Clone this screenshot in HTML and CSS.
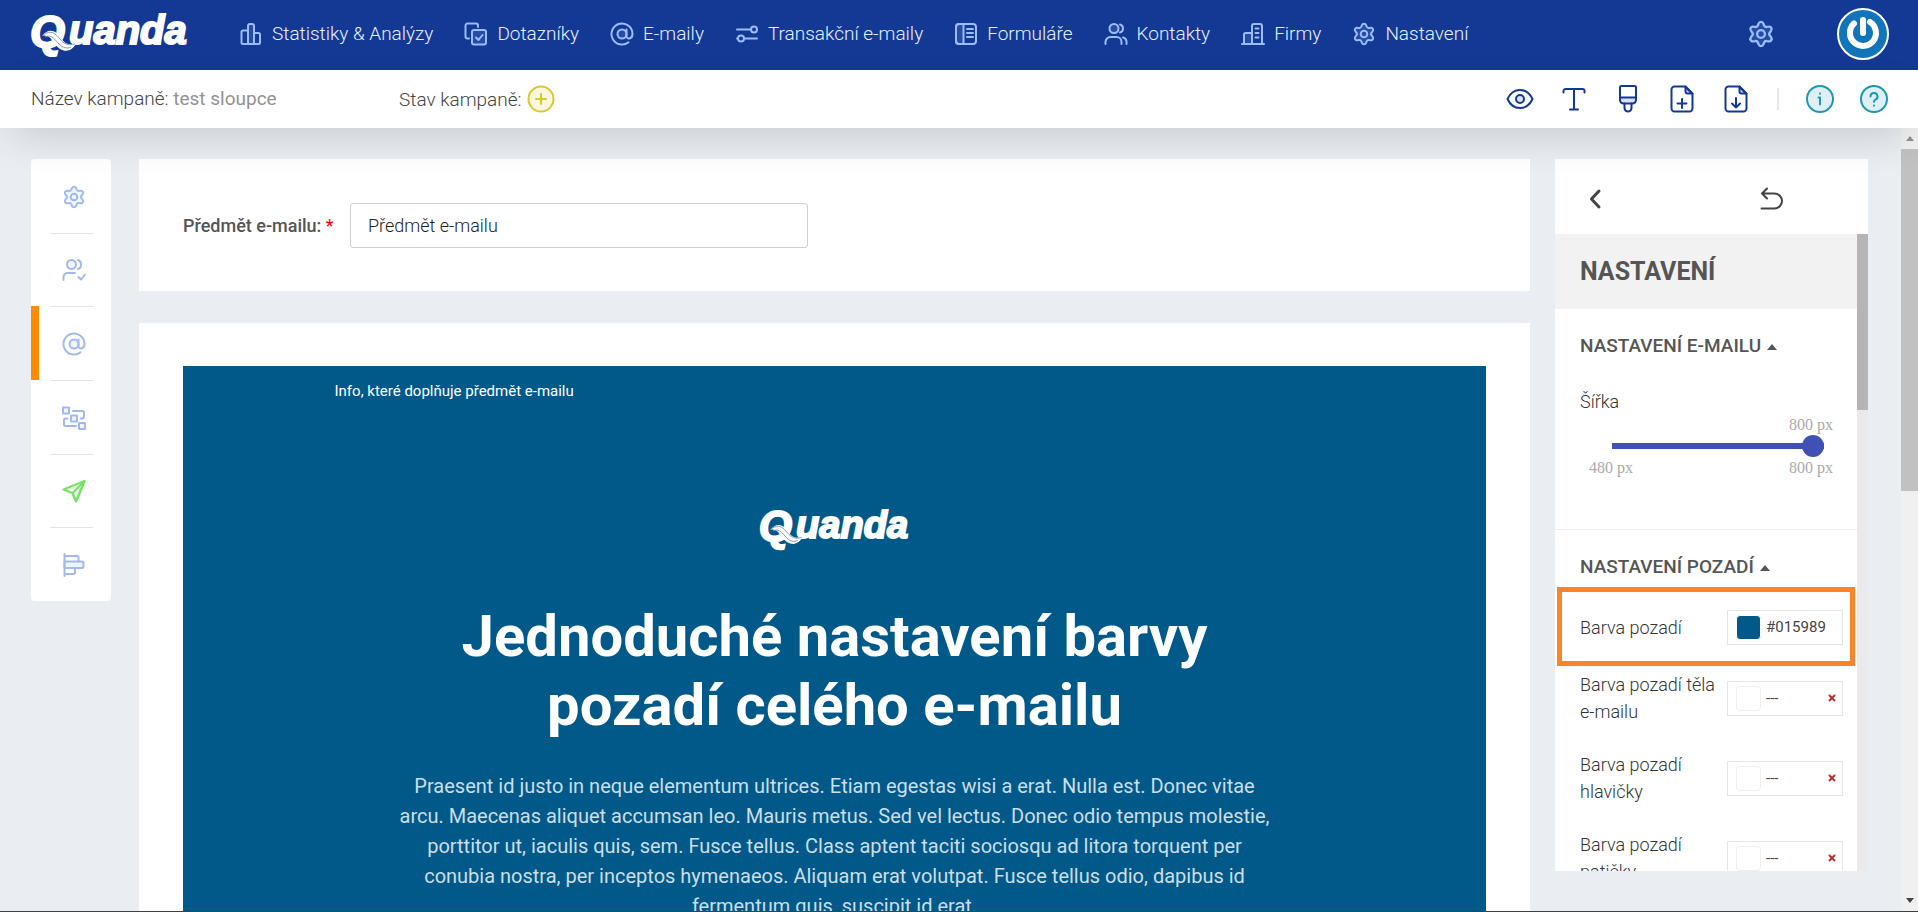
FILE: index.html
```
<!DOCTYPE html>
<html lang="cs">
<head>
<meta charset="utf-8">
<meta name="viewport" content="width=device-width, initial-scale=1">
<title>Quanda</title>
<link rel="stylesheet" href="styles.css">
</head>
<body>
<svg class="defs" aria-hidden="true">
  <symbol id="logo" viewBox="0 0 158 42" overflow="visible">
    <text class="logo-text" x="-1" y="34" font-size="45">Q</text>
    <text class="logo-text" x="38" y="31" font-size="40">uanda</text>
    <path class="logo-wave" d="M11 23c7-9 14-5 18 1s9 10 17 5c-4 8-10 11-17 7S20 20 11 23z"/>
    <path class="logo-line" d="M12 22c8-6 13-1 17 4s8 7 15 5M14 24c7-3 10 3 14 7s8 5 12 3"/>
  </symbol>
  <symbol id="gear" viewBox="0 0 24 24">
    <path class="tint" d="M9.9 3.2a2.2 2.2 0 0 1 4.200 0l.5 1.300a2.200 2.200 0 0 0 2.500 1.400l1.400-.2a2.200 2.200 0 0 1 2.100 3.600l-.9 1.200a2.200 2.200 0 0 0 0 3l.9 1.200a2.200 2.200 0 0 1-2.100 3.600l-1.400-.2a2.200 2.200 0 0 0-2.500 1.400l-.5 1.300a2.200 2.200 0 0 1-4.200 0l-.5-1.300a2.200 2.200 0 0 0-2.500-1.400l-1.400.2a2.200 2.200 0 0 1-2.100-3.600l.9-1.200a2.200 2.200 0 0 0 0-3l-.9-1.200a2.200 2.200 0 0 1 2.100-3.600l1.400.2a2.200 2.200 0 0 0 2.500-1.400z"/>
    <circle cx="12" cy="12" r="3.300"/>
  </symbol>
  <symbol id="at" viewBox="0 0 24 24">
    <circle class="tint" cx="12" cy="12" r="4.500"/>
    <path d="M16.500 7.500V14c0 3.700 6 3.500 6-2A10.500 10.500 0 1 0 18.500 20.300"/>
  </symbol>
</svg>

<header class="topbar">
  <a class="brand" href="#" aria-label="Quanda"><svg class="logo"><use href="#logo"/></svg></a>
  <nav class="menu">
    <a href="#"><svg class="icon" viewBox="0 0 24 24"><path d="M2.500 10a1.500 1.500 0 0 1 1.500-1.500h5v13.500H4A1.500 1.500 0 0 1 2.500 20.500zM15 11h4.500A1.500 1.500 0 0 1 21 12.500v8a1.500 1.500 0 0 1-1.500 1.500H15z"/><path class="tint" d="M9 22V4a2 2 0 0 1 2-2h2a2 2 0 0 1 2 2v18z"/></svg>Statistiky &amp; Analýzy</a>
    <a href="#"><svg class="icon" viewBox="0 0 24 24"><path d="M5 16.500H3.500a2 2 0 0 1-2-2v-11a2 2 0 0 1 2-2H12a2 2 0 0 1 2 2V5"/><rect class="tint" x="8" y="8" width="14" height="14.500" rx="2"/><path d="M12 15.500l2.500 2.500 4-5"/></svg>Dotazníky</a>
    <a href="#"><svg class="icon"><use href="#at"/></svg>E-maily</a>
    <a href="#"><svg class="icon" viewBox="0 0 24 24"><path d="M2 7.500h14M10 16.500h12M2 16.500h1"/><circle cx="19" cy="7.500" r="3"/><circle cx="6" cy="16.500" r="3"/></svg>Transakční e-maily</a>
    <a href="#"><svg class="icon" viewBox="0 0 24 24"><rect x="2" y="2" width="20" height="20" rx="3"/><path class="tint" d="M5 2h4.500v20H5a3 3 0 0 1-3-3V5a3 3 0 0 1 3-3z"/><path d="M13 7h6M13 11h6M13 15h6"/></svg>Formuláře</a>
    <a href="#"><svg class="icon" viewBox="0 0 24 24"><circle class="tint" cx="10" cy="6.500" r="4.500"/><path d="M1.500 22v-2a5 5 0 0 1 5-5h6a5 5 0 0 1 5 5v2M16 2.500c4 1 4 7 0 8M19 15.500a4.500 4.500 0 0 1 3.500 4.500v2"/></svg>Kontakty</a>
    <a href="#"><svg class="icon" viewBox="0 0 24 24"><path class="tint" d="M3 22v-9.500a1.500 1.500 0 0 1 1.500-1.500H11v11"/><path d="M1 22h22M11 22V4a2 2 0 0 1 2-2h6a2 2 0 0 1 2 2v18M14.500 6.500h3M14.500 11h3M14.500 15.500h3"/></svg>Firmy</a>
    <a href="#"><svg class="icon"><use href="#gear"/></svg>Nastavení</a>
  </nav>
  <button class="icon-btn top-gear" type="button" aria-label="Nastavení účtu"><svg class="icon"><use href="#gear"/></svg></button>
  <button class="avatar" type="button" aria-label="Profil"><svg viewBox="0 0 48 48"><path d="M15 13.500A13 13 0 1 0 31 12"/><path d="M24 10v13"/></svg></button>
</header>

<section class="subbar">
  <p class="campaign">Název kampaně: <span>test sloupce</span></p>
  <p class="state">Stav kampaně: <button class="icon-btn" type="button" aria-label="Přidat stav"><svg class="icon yellow" viewBox="0 0 28 28"><circle class="tint" cx="14" cy="14" r="12.500"/><path d="M14 9v10M9 14h10"/></svg></button></p>
  <div class="tools">
    <button class="icon-btn" type="button" aria-label="Náhled"><svg class="icon" viewBox="0 0 28 28"><path d="M1.500 14C7 2 21 2 26.500 14 21 26 7 26 1.500 14z" /><circle class="tint" cx="14" cy="14" r="4"/></svg></button>
    <button class="icon-btn" type="button" aria-label="Text"><svg class="icon" viewBox="0 0 28 28"><path d="M3.500 7.500V6a2 2 0 0 1 2-2h17a2 2 0 0 1 2 2v1.500M14 4v20.500M10 24.500h8"/></svg></button>
    <button class="icon-btn" type="button" aria-label="Styl"><svg class="icon" viewBox="0 0 28 28"><path class="tint" d="M6 12.500h16V15a3.500 3.500 0 0 1-3.500 3.500h-9A3.500 3.500 0 0 1 6 15z"/><path d="M6 12.500v-10A1.500 1.500 0 0 1 7.500 1h13A1.500 1.500 0 0 1 22 2.500v10M10.500 18.500V23a3.500 3.500 0 0 0 7 0v-4.500"/></svg></button>
    <button class="icon-btn" type="button" aria-label="Nový soubor"><svg class="icon" viewBox="0 0 28 28"><path class="tint" d="M17.500 1.500 24.500 8.500h-5a2 2 0 0 1-2-2z"/><path d="M17 1.500H6.500a3 3 0 0 0-3 3v19a3 3 0 0 0 3 3h15a3 3 0 0 0 3-3V9zM14 14v9M9.500 18.500h9"/></svg></button>
    <button class="icon-btn" type="button" aria-label="Uložit soubor"><svg class="icon" viewBox="0 0 28 28"><path class="tint" d="M17.500 1.500 24.500 8.500h-5a2 2 0 0 1-2-2z"/><path d="M17 1.500H6.500a3 3 0 0 0-3 3v19a3 3 0 0 0 3 3h15a3 3 0 0 0 3-3V9zM14 13v9M10 18.500l4 4 4-4"/></svg></button>
    <i class="separator"></i>
    <button class="icon-btn" type="button" aria-label="Informace"><svg class="icon teal" viewBox="0 0 28 28"><circle class="tint" cx="14" cy="14" r="13"/><path d="M12.500 12.500H14v7M14 8.500v.2"/></svg></button>
    <button class="icon-btn" type="button" aria-label="Nápověda"><svg class="icon teal" viewBox="0 0 28 28"><circle class="tint" cx="14" cy="14" r="13"/><path d="M10.500 11.500a3.500 3.500 0 1 1 5 3.200c-1 .5-1.500 1-1.500 2.300M14 20.500v.2"/></svg></button>
  </div>
</section>

<div class="workspace">
  <nav class="steps">
    <a href="#" aria-label="Nastavení"><svg class="icon"><use href="#gear"/></svg></a>
    <a href="#" aria-label="Příjemci"><svg class="icon" viewBox="0 0 24 24"><circle class="tint" cx="9.500" cy="6.500" r="4.500"/><path d="M1.500 22v-3a4 4 0 0 1 4-4H13M16 2c4 1 4 8 0 9M16.500 19l2.500 2.500 4-5"/></svg></a>
    <a class="active" href="#" aria-label="E-mail"><svg class="icon"><use href="#at"/></svg></a>
    <a href="#" aria-label="Workflow"><svg class="icon" viewBox="0 0 24 24"><path d="M11 5h9.500A1.500 1.500 0 0 1 22 6.500v4a2 2 0 0 1-2 2h-1.500M5.500 12.500H4a2 2 0 0 0-2 2v4A1.500 1.500 0 0 0 3.500 20H14"/><rect class="tint" x="1" y="1.500" width="6" height="6"/><rect class="tint" x="9" y="9.500" width="6" height="6"/><rect class="tint" x="17" y="17" width="6" height="6"/></svg></a>
    <a href="#" aria-label="Odeslat"><svg class="icon green" viewBox="0 0 24 24"><path class="tint" d="M22.500 2 14 22.500 10.500 14z"/><path d="M22.500 2 1.500 10.500 10.500 14 14 22.500z"/></svg></a>
    <a href="#" aria-label="Reporty"><svg class="icon" viewBox="0 0 24 24"><path class="tint" d="M2.500 8.500H20a1.500 1.500 0 0 1 1.500 1.500v3.500a1.500 1.500 0 0 1-1.500 1.500H2.500z"/><path d="M2.500 1v22M2.500 3H15a1.500 1.500 0 0 1 1.500 1.500v4M13 15v4.500a1.500 1.500 0 0 1-1.500 1.500h-9"/></svg></a>
  </nav>

  <main class="content">
    <form class="card subject">
      <label for="subject">Předmět e-mailu: <em>*</em></label>
      <input id="subject" type="text" value="Předmět e-mailu">
    </form>
    <section class="card preview">
      <article class="email">
        <p class="preheader">Info, které doplňuje předmět e-mailu</p>
        <svg class="logo email-logo" role="img" aria-label="Quanda" viewBox="0 0 158 42"><use href="#logo" width="158" height="42"/></svg>
        <h1>Jednoduché nastavení barvy pozadí celého e-mailu</h1>
        <p class="lead">Praesent id justo in neque elementum ultrices. Etiam egestas wisi a erat. Nulla est. Donec vitae arcu. Maecenas aliquet accumsan leo. Mauris metus. Sed vel lectus. Donec odio tempus molestie, porttitor ut, iaculis quis, sem. Fusce tellus. Class aptent taciti sociosqu ad litora torquent per conubia nostra, per inceptos hymenaeos. Aliquam erat volutpat. Fusce tellus odio, dapibus id fermentum quis, suscipit id erat.</p>
      </article>
    </section>
  </main>

  <aside class="panel">
    <div class="panel-head">
      <button class="icon-btn" type="button" aria-label="Zpět"><svg class="icon chevron" viewBox="0 0 24 24"><path d="M14 4 6.500 12l7.500 8"/></svg></button>
      <button class="icon-btn" type="button" aria-label="Vrátit změnu"><svg class="icon" viewBox="0 0 24 24"><path d="M7 1.500 2 6.500l5 5M2 6.500h12.500a7.500 7.500 0 0 1 0 15H1.500"/></svg></button>
    </div>
    <div class="panel-scroll">
      <div class="panel-body">
        <h2>NASTAVENÍ</h2>
        <section class="group">
          <h3><button type="button">NASTAVENÍ E-MAILU<i class="caret"></i></button></h3>
          <label class="width-label" for="width">Šířka</label>
          <div class="slider">
            <output for="width">800 px</output>
            <input id="width" type="range" min="480" max="800" value="800">
            <div class="limits"><span>480 px</span><span>800 px</span></div>
          </div>
        </section>
        <section class="group">
          <h3><button type="button">NASTAVENÍ POZADÍ<i class="caret"></i></button></h3>
          <div class="row highlighted">
            <label for="bg">Barva pozadí</label>
            <div class="color"><i class="swatch filled"></i><input id="bg" type="text" value="#015989"></div>
          </div>
          <div class="row">
            <label for="bg-body">Barva pozadí těla e-mailu</label>
            <div class="color"><i class="swatch"></i><input id="bg-body" type="text" value="---"><button type="button" aria-label="Vymazat"><svg viewBox="0 0 8 8"><path d="M1 1l6 6M7 1 1 7"/></svg></button></div>
          </div>
          <div class="row">
            <label for="bg-head">Barva pozadí hlavičky</label>
            <div class="color"><i class="swatch"></i><input id="bg-head" type="text" value="---"><button type="button" aria-label="Vymazat"><svg viewBox="0 0 8 8"><path d="M1 1l6 6M7 1 1 7"/></svg></button></div>
          </div>
          <div class="row">
            <label for="bg-foot">Barva pozadí patičky</label>
            <div class="color"><i class="swatch"></i><input id="bg-foot" type="text" value="---"><button type="button" aria-label="Vymazat"><svg viewBox="0 0 8 8"><path d="M1 1l6 6M7 1 1 7"/></svg></button></div>
          </div>
        </section>
      </div>
      <div class="panel-bar"><i></i></div>
    </div>
  </aside>

  <div class="scrollbar">
    <i class="arrow up"></i>
    <i class="thumb"></i>
    <i class="arrow down"></i>
  </div>
</div>
</body>
</html>
```

FILE: styles.css
```
* { box-sizing: border-box; }

body {
  margin: 0;
  height: 100vh;
  display: flex;
  flex-direction: column;
  overflow: hidden;
  border-bottom: 1px solid #3f4045;
  background: #eaeef2;
  color: #555;
  font: 18px/27px Roboto, "Liberation Sans", sans-serif;
}

h1, h2, h3, p { margin: 0; }
a { color: inherit; text-decoration: none; }
button, input { font: inherit; color: inherit; }
button { padding: 0; border: 0; background: none; }

.defs { position: absolute; width: 0; height: 0; overflow: visible; }

.icon {
  display: block;
  width: 24px;
  height: 24px;
  flex: none;
  fill: none;
  stroke: currentColor;
  stroke-width: 2;
  stroke-linecap: round;
  stroke-linejoin: round;
}
.tint { fill: currentColor; fill-opacity: 0.15; }
.icon-btn { display: inline-flex; }

.logo { display: block; width: 158px; height: 42px; overflow: visible; }
.logo-text {
  font-family: "Liberation Sans", sans-serif;
  font-weight: 700;
  font-style: italic;
  fill: #fff;
  stroke: #fff;
  stroke-width: 2;
}
.logo-wave { fill: #fff; }
.logo-line { fill: none; stroke: #8497c6; stroke-width: 1; }

/* Top navigation */
.topbar {
  flex: none;
  height: 70px;
  display: flex;
  align-items: center;
  padding: 0 29px 2px 31px;
  background: #133995;
  color: #e8eefb;
}
.brand { margin-right: 50px; }
.menu { display: flex; gap: 31px; flex: 1; font-size: 19px; font-weight: 300; }
.menu a { display: flex; align-items: center; gap: 9px; white-space: nowrap; line-height: 24px; }
.menu .icon, .top-gear { color: #9dbcff; }
.top-gear { margin-right: 62px; }
.top-gear .icon { width: 28px; height: 28px; }
.avatar {
  width: 52px;
  height: 52px;
  border: 2px solid #fff;
  border-radius: 50%;
  background: #1275b9;
}
.avatar svg { display: block; fill: none; stroke: #fff; stroke-width: 6; stroke-linecap: round; }

/* Campaign bar */
.subbar {
  flex: none;
  position: relative;
  z-index: 1;
  height: 58px;
  display: flex;
  align-items: center;
  padding: 0 30px 0 31px;
  background: #fff;
  box-shadow: 0 16px 40px -12px rgba(50, 60, 65, 0.24);
  font-size: 19px;
  font-weight: 300;
  color: #444;
}
.campaign { width: 368px; padding-bottom: 2px; }
.campaign span { font-weight: 400; color: #929292; }
.state { display: flex; align-items: center; gap: 5px; flex: 1; }
.subbar .icon { width: 28px; height: 28px; }
.yellow { color: #d9c92c; }
.teal { color: #1f97b0; }
.tools { display: flex; align-items: center; gap: 26px; color: #133995; }
.separator { width: 2px; height: 22px; margin: 0 1px; background: #e8e8e8; }

/* Workspace */
.workspace { flex: 1; min-height: 0; display: flex; overflow: hidden; }

.steps {
  flex: none;
  align-self: flex-start;
  display: grid;
  grid-auto-rows: 1fr;
  width: 80px;
  height: 442px;
  margin: 31px 28px 0 31px;
  border-radius: 4px;
  background: #fff;
  color: #a3b9ee;
}
.steps a { position: relative; display: grid; place-items: center; padding: 2px 0 0 5px; }
.steps a + a::before {
  content: "";
  position: absolute;
  top: 0;
  left: 19px;
  right: 18px;
  height: 1px;
  background: #e3e3e3;
}
.steps a.active::after {
  content: "";
  position: absolute;
  inset: 0 auto 0 0;
  width: 8px;
  background: #ff8a00;
}
.steps .green { color: #72e560; }

.content { flex: 1; min-width: 0; padding-top: 31px; display: flex; flex-direction: column; gap: 32px; }
.card { flex: none; background: #fff; padding: 43px 44px; }
.subject { display: flex; align-items: center; padding-top: 44px; }
.subject label { width: 167px; font-weight: 500; }
.subject em { color: #e00; font-style: normal; font-weight: 400; }
.subject input {
  width: 458px;
  height: 45px;
  padding: 0 17px;
  border: 1px solid #d0d0d0;
  border-radius: 3px;
  background: #fff;
  font-weight: 300;
  color: #222;
}

.email {
  padding: 12px 43px 60px;
  background: #015989;
  color: #fff;
  text-align: center;
}
.preheader { max-width: 1000px; margin: 0 auto; font-size: 15px; line-height: 26px; text-align: left; }
.email-logo { width: 152px; height: 40px; margin: 104px auto 54px; }
.email h1 { max-width: 880px; margin: 0 auto 31px; font-size: 58px; line-height: 69px; font-weight: 700; }
.lead { max-width: 880px; margin: 0 auto; font-size: 20px; line-height: 30px; color: #ccdee7; }

/* Settings panel */
.panel {
  flex: none;
  width: 313px;
  margin: 31px 33px 40px 25px;
  display: flex;
  flex-direction: column;
  background: #fff;
}
.panel-head {
  flex: none;
  height: 75px;
  display: flex;
  align-items: center;
  justify-content: space-between;
  padding: 4px 84px 0 30px;
  color: #444;
}
.panel-head .chevron { stroke-width: 3; }
.panel-scroll { flex: 1; min-height: 0; display: flex; }
.panel-body { flex: 1; overflow: hidden; }
.panel-bar { width: 11px; background: #eaeaea; }
.panel-bar i { display: block; height: 176px; background: #b5b5b5; }
.panel h2 { padding: 0 25px; background: #f2f2f2; font-size: 25px; line-height: 75px; font-weight: 700; }
.group { padding: 23px 14px 50px 25px; }
.group + .group { border-top: 1px solid #eee; }
.group h3 { margin-bottom: 29px; font-size: 19px; line-height: 28px; font-weight: 500; }
.caret {
  display: inline-block;
  margin-left: 6px;
  border: 5px solid transparent;
  border-top: 0;
  border-bottom: 6px solid #555;
  vertical-align: 2px;
}
.width-label { display: block; line-height: 26px; font-weight: 300; color: #333; }
.slider { padding: 0 10px 0 9px; font: 16px/22px "Liberation Serif", serif; color: #aaa; }
.slider output { display: block; line-height: 20px; text-align: right; }
.slider input {
  appearance: none;
  display: block;
  width: 212px;
  height: 22px;
  margin: 0 9px 0 auto;
  background: linear-gradient(#3f51b5, #3f51b5) center / 100% 6px no-repeat;
}
.slider input::-webkit-slider-thumb {
  appearance: none;
  width: 22px;
  height: 22px;
  border-radius: 50%;
  background: #3f51b5;
}
.limits { display: flex; justify-content: space-between; }

.row { position: relative; display: flex; align-items: center; justify-content: space-between; gap: 8px; margin-bottom: 26px; }
.row label { flex: 1; font-weight: 300; color: #333; }
.highlighted::after {
  content: "";
  position: absolute;
  inset: -23px -12px -21px -23px;
  border: 5px solid #ff8328;
  pointer-events: none;
}
.color {
  width: 116px;
  height: 35px;
  display: flex;
  align-items: center;
  gap: 5px;
  padding: 0 6px 0 8px;
  border: 1px solid #e4e4e4;
  color: #444;
}
.color input { flex: 1; min-width: 0; padding: 0; border: 0; background: none; font-size: 15px; }
.swatch { width: 25px; height: 25px; border: 1px solid #eee; border-radius: 4px; }
.swatch.filled { border-color: #fff; background: #015989; }
.color button { width: 8px; height: 8px; }
.color svg { display: block; fill: none; stroke: #b5302a; stroke-width: 2; }

/* Window scrollbar */
.scrollbar {
  flex: none;
  width: 17px;
  display: flex;
  flex-direction: column;
  background: #f0f0f0;
}
.arrow { height: 21px; display: grid; place-items: center; }
.arrow::before { content: ""; border: 4px solid transparent; }
.up::before { border-top: 0; border-bottom: 5px solid #8f8f8f; }
.down { margin-top: auto; }
.down::before { border-bottom: 0; border-top: 5px solid #444; }
.thumb { height: 342px; background: #c1c1c1; }
```
